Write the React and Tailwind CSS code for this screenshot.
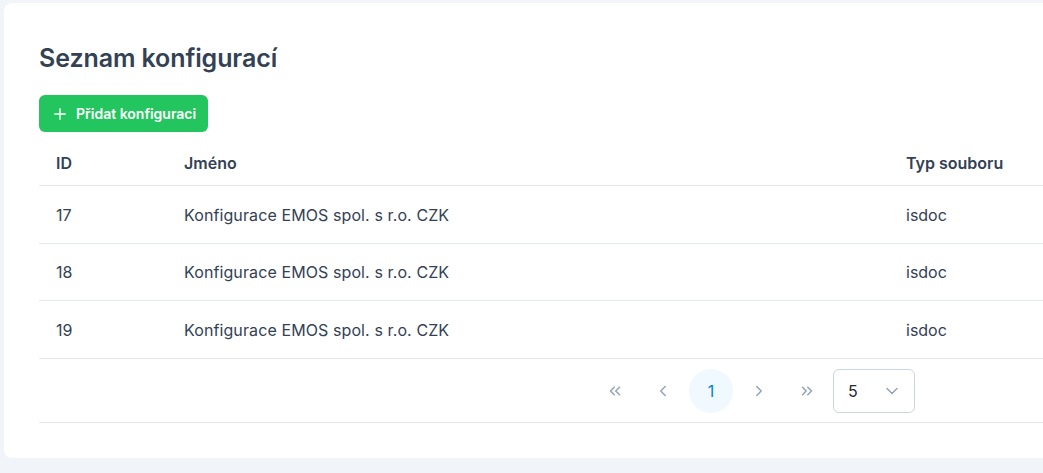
import { Plus, ChevronsLeft, ChevronLeft, ChevronRight, ChevronsRight, ChevronDown } from "lucide-react";

const rows = [
  { id: 17, name: "Konfigurace EMOS spol. s r.o. CZK", type: "isdoc" },
  { id: 18, name: "Konfigurace EMOS spol. s r.o. CZK", type: "isdoc" },
  { id: 19, name: "Konfigurace EMOS spol. s r.o. CZK", type: "isdoc" },
];

export default function App() {
  return (
    <div
      className="w-full h-[473px] overflow-hidden bg-[#f1f5f9] pt-[3px] pl-1"
      style={{ fontFamily: "Inter, 'Noto Sans', sans-serif" }}
    >
      <div className="w-[1120px] h-[455px] bg-white rounded-lg pl-[35px] pt-[39px]">
        <h2 className="text-[25px] leading-[32px] font-semibold text-[#334155] tracking-[-0.1px]">
          Seznam konfigurací
        </h2>

        <button className="mt-[21px] h-[37px] px-[12px] flex items-center gap-[7px] bg-[#22c55e] text-white rounded-md text-[14px] font-semibold">
          <Plus className="h-[18px] w-[18px]" strokeWidth={1.8} />
          Přidat konfiguraci
        </button>

        <div className="mt-[8px] text-[16px] text-[#334155]">
          <div className="flex h-[46px] items-center border-b border-[#e2e8f0] font-semibold">
            <div className="w-[128px] pl-[17px]">ID</div>
            <div className="w-[722px] pl-[17px]">Jméno</div>
            <div className="pl-[17px]">Typ souboru</div>
          </div>

          {rows.map((row, i) => (
            <div
              key={row.id}
              className={`flex items-center border-b border-[#e2e8f0] ${i === 1 ? "h-[57px]" : "h-[58px]"}`}
            >
              <div className="w-[128px] pl-[17px]">{row.id}</div>
              <div className="w-[722px] pl-[17px] tracking-[0.1px]">{row.name}</div>
              <div className="pl-[17px]">{row.type}</div>
            </div>
          ))}

          <div className="flex h-[64px] items-center border-b border-[#e2e8f0]">
            <div className="w-[790px] flex items-center justify-end gap-[4px] text-[#94a3b8]">
              <button className="w-[44px] h-[44px] flex items-center justify-center">
                <ChevronsLeft className="h-[18px] w-[18px]" strokeWidth={2} />
              </button>
              <button className="w-[44px] h-[44px] flex items-center justify-center">
                <ChevronLeft className="h-[18px] w-[18px]" strokeWidth={2} />
              </button>
              <button className="w-[44px] h-[44px] rounded-full bg-[#f0f9ff] text-[#0284c7] flex items-center justify-center text-[16px]">
                1
              </button>
              <button className="w-[44px] h-[44px] flex items-center justify-center">
                <ChevronRight className="h-[18px] w-[18px]" strokeWidth={2} />
              </button>
              <button className="w-[44px] h-[44px] flex items-center justify-center">
                <ChevronsRight className="h-[18px] w-[18px]" strokeWidth={2} />
              </button>
            </div>
            <div className="ml-[4px] w-[82px] h-[44px] border border-[#cbd5e1] rounded-md flex items-center justify-between pl-[14px] pr-[12px]">
              <span className="text-[16px] text-[#1e293b]">5</span>
              <ChevronDown className="h-[20px] w-[20px] text-[#94a3b8]" strokeWidth={1.8} />
            </div>
          </div>
        </div>
      </div>
    </div>
  );
}
